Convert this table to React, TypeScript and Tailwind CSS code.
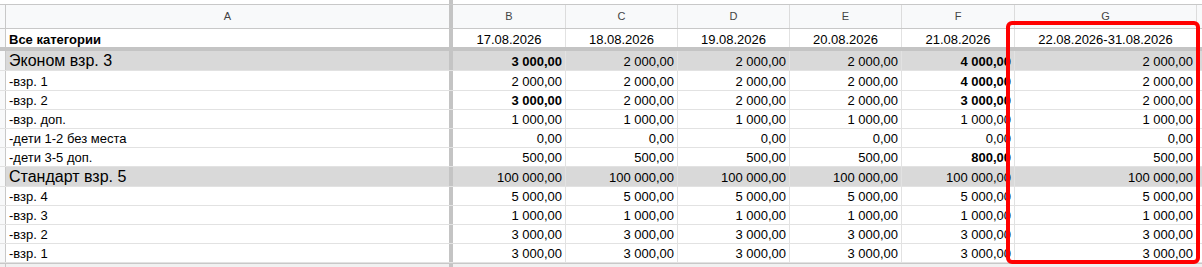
const cols = ["B", "C", "D", "E", "F", "G"];
const widths = ["w-[113px]", "w-[112px]", "w-[112px]", "w-[112px]", "w-[113px]", "w-[182px]"];
const dates = ["17.08.2026", "18.08.2026", "19.08.2026", "20.08.2026", "21.08.2026", "22.08.2026-31.08.2026"];

type Row = {
  label: string;
  values: string[];
  bold?: number[];
  group?: boolean;
  h: string;
};

const rows: Row[] = [
  { label: "Эконом взр. 3", values: ["3 000,00", "2 000,00", "2 000,00", "2 000,00", "4 000,00", "2 000,00"], bold: [0, 4], group: true, h: "h-[20px]" },
  { label: "-взр. 1", values: ["2 000,00", "2 000,00", "2 000,00", "2 000,00", "4 000,00", "2 000,00"], bold: [4], h: "h-[20px]" },
  { label: "-взр. 2", values: ["3 000,00", "2 000,00", "2 000,00", "2 000,00", "3 000,00", "2 000,00"], bold: [0, 4], h: "h-[19px]" },
  { label: "-взр. доп.", values: ["1 000,00", "1 000,00", "1 000,00", "1 000,00", "1 000,00", "1 000,00"], h: "h-[19px]" },
  { label: "-дети 1-2 без места", values: ["0,00", "0,00", "0,00", "0,00", "0,00", "0,00"], h: "h-[19px]" },
  { label: "-дети 3-5 доп.", values: ["500,00", "500,00", "500,00", "500,00", "800,00", "500,00"], bold: [4], h: "h-[19px]" },
  { label: "Стандарт взр. 5", values: ["100 000,00", "100 000,00", "100 000,00", "100 000,00", "100 000,00", "100 000,00"], group: true, h: "h-[20px]" },
  { label: "-взр. 4", values: ["5 000,00", "5 000,00", "5 000,00", "5 000,00", "5 000,00", "5 000,00"], h: "h-[19px]" },
  { label: "-взр. 3", values: ["1 000,00", "1 000,00", "1 000,00", "1 000,00", "1 000,00", "1 000,00"], h: "h-[19px]" },
  { label: "-взр. 2", values: ["3 000,00", "3 000,00", "3 000,00", "3 000,00", "3 000,00", "3 000,00"], h: "h-[19px]" },
  { label: "-взр. 1", values: ["3 000,00", "3 000,00", "3 000,00", "3 000,00", "3 000,00", "3 000,00"], h: "h-[19px]" },
];

const Divider = () => <div className="w-[4px] shrink-0 self-stretch bg-[#c4c4c4]" />;

export default function App() {
  return (
    <div className="relative h-[267px] w-[1202px] overflow-hidden bg-white font-['Liberation_Sans',Arial,sans-serif] text-[13px] text-black">
      <div className="flex h-[4px]">
        <div className="w-[449px]" />
        <Divider />
      </div>

      {/* column letters */}
      <div className="flex h-[25px] border-y border-[#c8c8c8] bg-[#f8f9fa] text-[11px] text-[#444]">
        <div className="w-[6px] shrink-0 border-r border-[#c8c8c8]" />
        <div className="flex w-[443px] shrink-0 items-center justify-center">A</div>
        <Divider />
        {cols.map((c, i) => (
          <div key={c} className={`${widths[i]} flex shrink-0 items-center justify-center border-r border-[#dcdcdc]`}>
            {c}
          </div>
        ))}
      </div>

      {/* header row */}
      <div className="flex h-[18px]">
        <div className="w-[6px] shrink-0 border-r border-[#c8c8c8] bg-[#f8f9fa]" />
        <div className="flex w-[443px] shrink-0 items-end pl-[3px] font-bold leading-[15px]">Все категории</div>
        <Divider />
        {dates.map((d, i) => (
          <div key={d} className={`${widths[i]} flex shrink-0 items-end justify-center border-r border-[#e2e2e2] leading-[15px]`}>
            {d}
          </div>
        ))}
      </div>

      <div className="h-[4px] bg-[#c4c4c4]" />

      {rows.map((r, ri) => (
        <div key={ri} className={`flex ${r.h} border-b border-[#e2e2e2] ${r.group ? "bg-[#d9d9d9]" : ""}`}>
          <div className="w-[6px] shrink-0 border-r border-[#c8c8c8] bg-[#f8f9fa]" />
          <div
            className={`flex w-[443px] shrink-0 items-end pl-[3px] ${
              r.group ? "text-[16px] leading-[19px]" : "leading-[16px]"
            }`}
          >
            {r.label}
          </div>
          <Divider />
          {r.values.map((v, i) => (
            <div
              key={i}
              className={`${widths[i]} flex shrink-0 items-end justify-end overflow-hidden border-r border-[#e2e2e2] pr-[3px] leading-[16px] ${
                r.bold?.includes(i) ? "font-bold" : ""
              }`}
            >
              {v}
            </div>
          ))}
        </div>
      ))}

      {/* next row, cut off */}
      <div className="flex h-[20px] border-t border-[#c8c8c8] bg-[#f1f1f1]">
        <div className="w-[6px] shrink-0 border-r border-[#c8c8c8]" />
        <div className="flex w-[443px] shrink-0 items-start pt-[3px] pl-[3px] leading-[15px]">
          Стоимость доп. места для ребёнка (4-6) и взрослого
        </div>
        <Divider />
      </div>

      {/* highlight */}
      <div className="absolute left-[1006px] top-[21px] h-[243px] w-[194px] rounded-[6px] border-[4px] border-[#ff0000]" />
    </div>
  );
}
